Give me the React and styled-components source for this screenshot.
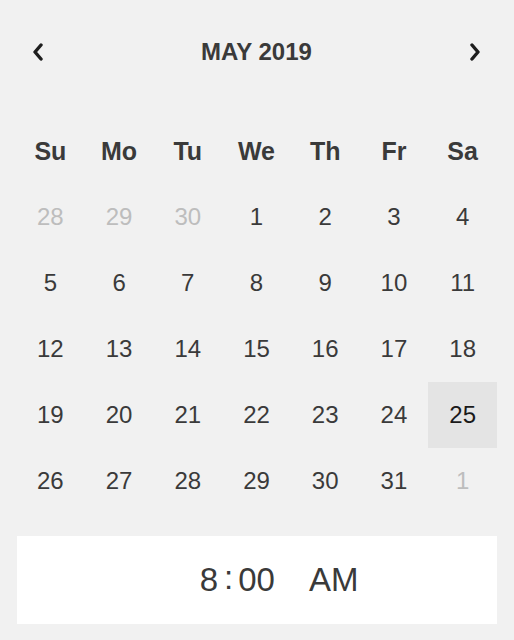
import React from "react";
import styled, { createGlobalStyle } from "styled-components";

const Global = createGlobalStyle`
  html, body { margin: 0; padding: 0; background: #f1f1f1; }
  body { font-family: "Liberation Sans", Arial, sans-serif; }
`;

const Wrap = styled.div`
  width: 514px;
  height: 640px;
  box-sizing: border-box;
  padding: 2px 17px 16px 16px;
  display: flex;
  flex-direction: column;
  background: #f1f1f1;
`;

const Header = styled.div`
  display: flex;
  align-items: center;
  justify-content: space-between;
  height: 102px;
  padding: 0 15px 2px 15px;
  box-sizing: border-box;
`;

const Title = styled.div`
  font-size: 24px;
  font-weight: 700;
  color: #3a3a3a;
`;

const Nav = styled.button`
  border: 0;
  background: none;
  padding: 0;
  width: 14px;
  height: 20px;
  display: flex;
  align-items: center;
  justify-content: center;
  cursor: pointer;
`;

const Grid = styled.div`
  display: grid;
  grid-template-columns: repeat(7, 1fr);
  grid-auto-rows: 66px;
  margin-top: 14px;
`;

const DayName = styled.div`
  display: flex;
  align-items: center;
  justify-content: center;
  font-size: 25px;
  font-weight: 700;
  color: #3a3a3a;
`;

const Day = styled.div`
  display: flex;
  align-items: center;
  justify-content: center;
  font-size: 24px;
  color: ${(p) => (p.$muted ? "#bdbdbd" : p.$selected ? "#1a1a1a" : "#3a3a3a")};
  background: ${(p) => (p.$selected ? "#e4e4e4" : "transparent")};
`;

const TimeBox = styled.div`
  margin-top: 22px;
  height: 88px;
  background: #ffffff;
  display: flex;
  align-items: center;
  justify-content: center;
  padding-left: 44px;
  gap: 34px;
  font-size: 33px;
  color: #3a3a3a;
  margin-left: 1px;
`;

const TimePart = styled.span`
  display: inline-flex;
  align-items: center;
`;

const Colon = styled.span`
  margin: 0 5px 0 6px;
  position: relative;
  top: -2px;
`;

const Chevron = ({ dir }) => (
  <svg width="14" height="18" viewBox="0 0 14 18">
    <polyline
      points={dir === "left" ? "10,2 4,9 10,16" : "4,2 10,9 4,16"}
      fill="none"
      stroke="#1e1e1e"
      strokeWidth="3.4"
      strokeLinecap="round"
      strokeLinejoin="round"
    />
  </svg>
);

const names = ["Su", "Mo", "Tu", "We", "Th", "Fr", "Sa"];
const days = [
  [28, true], [29, true], [30, true],
  ...Array.from({ length: 31 }, (_, i) => [i + 1, false]),
  [1, true],
];

export default function App() {
  return (
    <>
      <Global />
      <Wrap>
        <Header>
          <Nav><Chevron dir="left" /></Nav>
          <Title>MAY 2019</Title>
          <Nav><Chevron dir="right" /></Nav>
        </Header>
        <Grid>
          {names.map((n) => (
            <DayName key={n}>{n}</DayName>
          ))}
          {days.map(([d, m], i) => (
            <Day key={i} $muted={m} $selected={!m && d === 25}>
              {d}
            </Day>
          ))}
        </Grid>
        <TimeBox>
          <TimePart>
            8<Colon>:</Colon>00
          </TimePart>
          <TimePart>AM</TimePart>
        </TimeBox>
      </Wrap>
    </>
  );
}
